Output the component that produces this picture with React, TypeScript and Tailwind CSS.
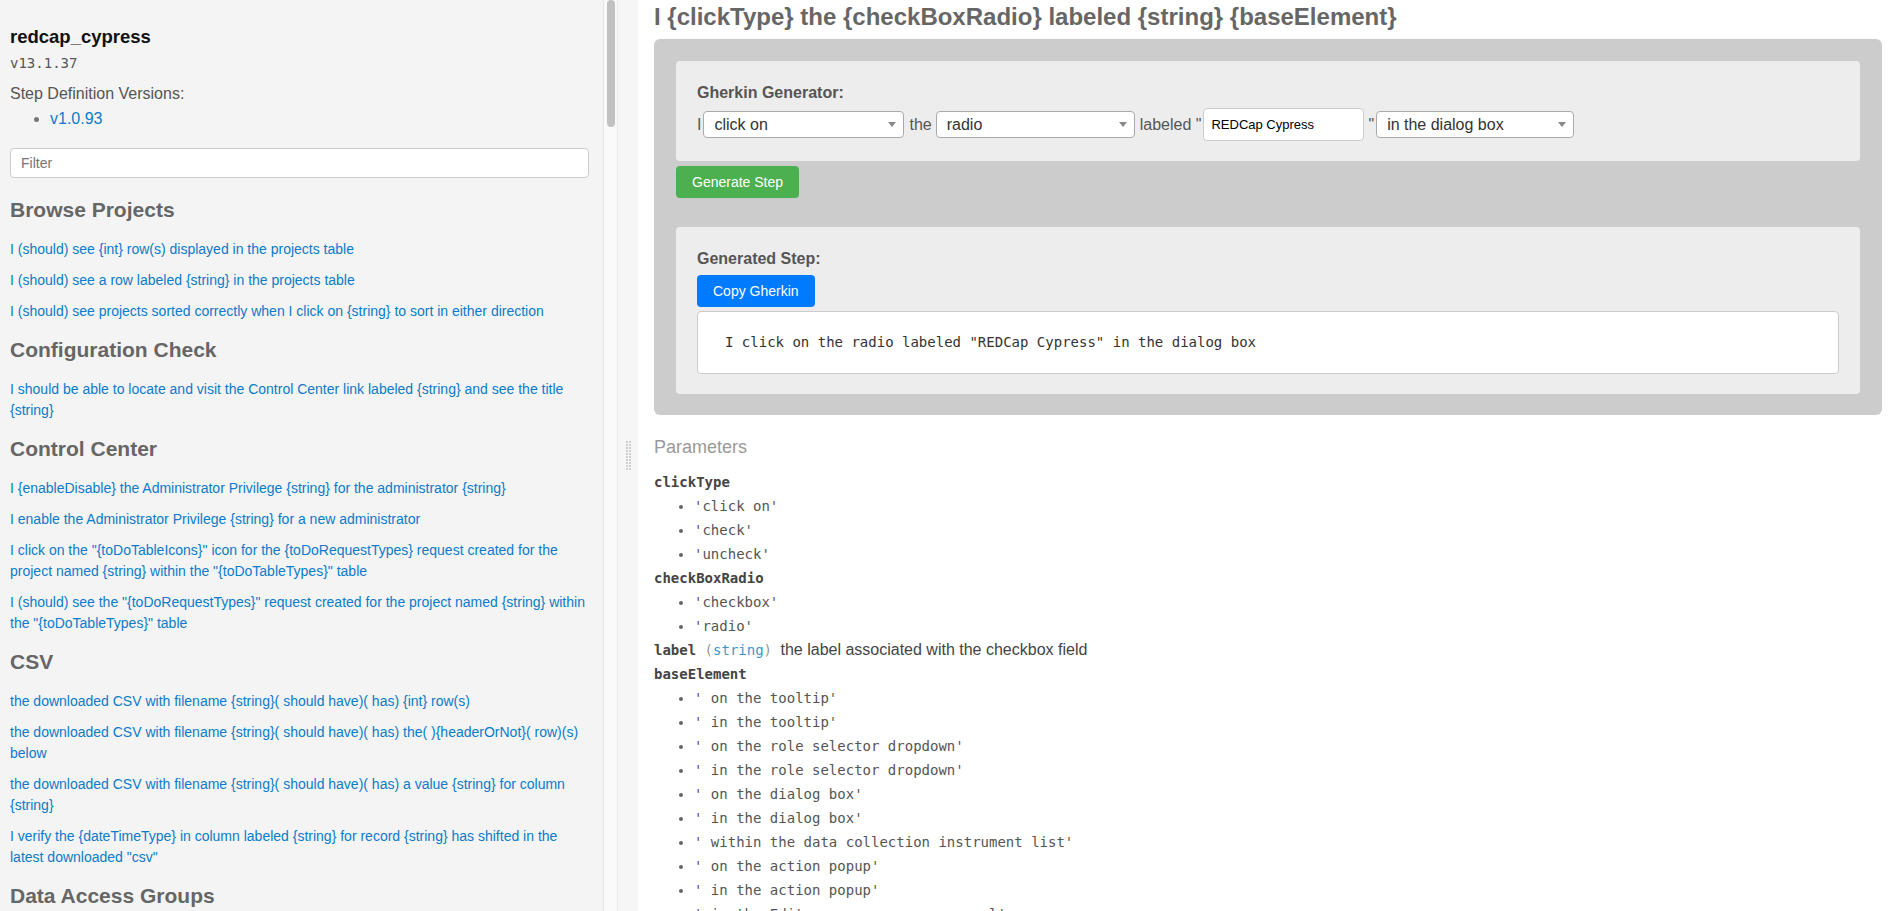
import React from 'react'

const SECTIONS: { title: string; steps: string[] }[] = [
  {
    title: 'Browse Projects',
    steps: [
      'I (should) see {int} row(s) displayed in the projects table',
      'I (should) see a row labeled {string} in the projects table',
      'I (should) see projects sorted correctly when I click on {string} to sort in either direction',
    ],
  },
  {
    title: 'Configuration Check',
    steps: ['I should be able to locate and visit the Control Center link labeled {string} and see the title {string}'],
  },
  {
    title: 'Control Center',
    steps: [
      'I {enableDisable} the Administrator Privilege {string} for the administrator {string}',
      'I enable the Administrator Privilege {string} for a new administrator',
      'I click on the "{toDoTableIcons}" icon for the {toDoRequestTypes} request created for the project named {string} within the "{toDoTableTypes}" table',
      'I (should) see the "{toDoRequestTypes}" request created for the project named {string} within the "{toDoTableTypes}" table',
    ],
  },
  {
    title: 'CSV',
    steps: [
      'the downloaded CSV with filename {string}( should have)( has) {int} row(s)',
      'the downloaded CSV with filename {string}( should have)( has) the( ){headerOrNot}( row)(s) below',
      'the downloaded CSV with filename {string}( should have)( has) a value {string} for column {string}',
      'I verify the {dateTimeType} in column labeled {string} for record {string} has shifted in the latest downloaded "csv"',
    ],
  },
  {
    title: 'Data Access Groups',
    steps: [
      'I assign the user {string} to the Data Access Group {string}',
      'I (should) see the Data Access Group {string} in the list',
    ],
  },
]

const PARAMS: { name: string; type?: string; desc?: string; options?: string[] }[] = [
  { name: 'clickType', options: ["'click on'", "'check'", "'uncheck'"] },
  { name: 'checkBoxRadio', options: ["'checkbox'", "'radio'"] },
  { name: 'label', type: 'string', desc: 'the label associated with the checkbox field' },
  {
    name: 'baseElement',
    options: [
      "' on the tooltip'",
      "' in the tooltip'",
      "' on the role selector dropdown'",
      "' in the role selector dropdown'",
      "' on the dialog box'",
      "' in the dialog box'",
      "' within the data collection instrument list'",
      "' on the action popup'",
      "' in the action popup'",
      "' in the Edit survey responses panel'",
      "' on the Add/Edit Branching Logic dialog box'",
    ],
  },
]

function FakeSelect({ value, className }: { value: string; className: string }) {
  return (
    <div
      className={`flex h-[27px] items-center justify-between rounded border border-[#aaaaaa] bg-white pl-[10px] pr-[7px] text-[16px] text-[#333] ${className}`}
    >
      <span>{value}</span>
      <svg width="8" height="5" viewBox="0 0 8 5">
        <path d="M0 0 L8 0 L4 5 Z" fill="#888" />
      </svg>
    </div>
  )
}

function GripDots() {
  const dots = []
  for (let r = 0; r < 10; r++) {
    for (let c = 0; c < 2; c++) {
      dots.push(<rect key={`${r}-${c}`} x={c * 3} y={r * 3} width="2" height="2" fill="#d0d0d0" />)
    }
  }
  return (
    <svg width="5" height="30" viewBox="0 0 5 30">
      {dots}
    </svg>
  )
}

export default function App() {
  return (
    <div className="flex h-screen w-full overflow-hidden bg-white font-['Liberation_Sans',Arial,sans-serif]">
      {/* Sidebar */}
      <aside className="w-[603px] shrink-0 overflow-hidden bg-[#f4f4f4] pl-[10px] pr-[14px] pt-[26px]">
        <div className="text-[18.5px] font-bold leading-[22px] text-[#111]">redcap_cypress</div>
        <div className="mt-[5px] font-['DejaVu_Sans_Mono',monospace] text-[14px] leading-[20px] text-[#555]">v13.1.37</div>
        <div className="mt-[11px] text-[16px] leading-[20px] text-[#555]">Step Definition Versions:</div>
        <ul className="mt-[5px] list-disc pl-10 text-[16px] leading-[20px] text-[#555] marker:text-[#777]">
          <li>
            <span className="text-[#0b7bcb]">v1.0.93</span>
          </li>
        </ul>
        <div className="mt-[19px] flex h-[30px] items-center rounded border border-[#cccccc] bg-white pl-[10px] text-[14px] text-[#757575]">
          Filter
        </div>

        <div className="mt-[19px] flex flex-col gap-[15px]">
          {SECTIONS.map(section => (
            <div key={section.title}>
              <h2 className="text-[21px] font-bold leading-[26px] text-[#666]">{section.title}</h2>
              <div className="mt-4 flex flex-col gap-[10px]">
                {section.steps.map(step => (
                  <a key={step} className="block cursor-pointer text-[14px] leading-[21px] text-[#0b7bcb]">
                    {step}
                  </a>
                ))}
              </div>
            </div>
          ))}
        </div>
      </aside>

      {/* Scrollbar */}
      <div className="w-[14px] shrink-0 border-l border-[#e6e6e6] bg-[#fafafa]">
        <div className="ml-[3px] h-[127px] w-[8px] rounded-full bg-[#c1c1c1]" />
      </div>

      {/* Resize gutter */}
      <div className="flex w-[21px] shrink-0 items-center justify-center border-l border-[#ebebeb] bg-[#f6f6f6]">
        <GripDots />
      </div>

      {/* Main */}
      <main className="flex-1 overflow-hidden pl-4 pr-3 pt-[3px]">
        <h1 className="whitespace-nowrap text-[24px] font-bold leading-[28px] text-[#666]">
          I {'{clickType}'} the {'{checkBoxRadio}'} labeled {'{string}'} {'{baseElement}'}
        </h1>

        <div className="mt-2 flex flex-col rounded-md bg-[#cccccc] px-[22px] pb-[21px] pt-[22px]">
          <div className="rounded bg-[#ededed] pb-[20px] pl-[21px] pr-[21px] pt-[22px]">
            <div className="text-[16px] font-bold leading-[20px] text-[#555]">Gherkin Generator:</div>
            <div className="mt-[5px] flex items-center text-[16px] leading-[20px] text-[#555]">
              <span>I</span>
              <FakeSelect value="click on" className="ml-[2px] w-[201px]" />
              <span className="ml-[5px]">the</span>
              <FakeSelect value="radio" className="ml-[4px] w-[199px]" />
              <span className="ml-[5px]">labeled "</span>
              <div className="ml-[2px] flex h-[33px] w-[161px] items-center rounded border border-[#cccccc] bg-white pl-[7px] text-[13px] text-black">
                REDCap Cypress
              </div>
              <span className="ml-[4px]">"</span>
              <FakeSelect value="in the dialog box" className="ml-[2px] w-[198px]" />
            </div>
          </div>

          <button className="mt-[5px] h-8 self-start rounded bg-[#4caf50] px-4 text-[14px] text-white">
            Generate Step
          </button>

          <div className="mt-[29px] flex flex-col rounded bg-[#ededed] pb-[20px] pl-[21px] pr-[21px] pt-[22px]">
            <div className="text-[16px] font-bold leading-[20px] text-[#555]">Generated Step:</div>
            <button className="mt-[6px] h-8 self-start rounded bg-[#007bff] px-4 text-[14px] text-white">
              Copy Gherkin
            </button>
            <div className="mt-[4px] flex h-[63px] items-center rounded border border-[#cccccc] bg-white pl-[27px] font-['DejaVu_Sans_Mono',monospace] text-[14px] text-[#333]">
              I click on the radio labeled "REDCap Cypress" in the dialog box
            </div>
          </div>
        </div>

        <div className="mt-5 text-[18px] leading-[24px] text-[#999]">Parameters</div>
        <div className="mt-[11px] font-['DejaVu_Sans_Mono',monospace] text-[14px] leading-[24px] text-[#555]">
          {PARAMS.map(p => (
            <div key={p.name}>
              <div>
                <span className="font-bold text-[#444]">{p.name}</span>
                {p.type && (
                  <>
                    {' '}
                    <span className="text-[#999]">(</span>
                    <span className="text-[#3a97d4]">{p.type}</span>
                    <span className="text-[#999]">)</span>{' '}
                    <span className="font-['Liberation_Sans',Arial,sans-serif] text-[16px] text-[#444]">{p.desc}</span>
                  </>
                )}
              </div>
              {p.options && (
                <ul className="list-disc pl-10 marker:text-[#666]">
                  {p.options.map(o => (
                    <li key={o} className="whitespace-pre">
                      {o}
                    </li>
                  ))}
                </ul>
              )}
            </div>
          ))}
        </div>
      </main>
    </div>
  )
}
